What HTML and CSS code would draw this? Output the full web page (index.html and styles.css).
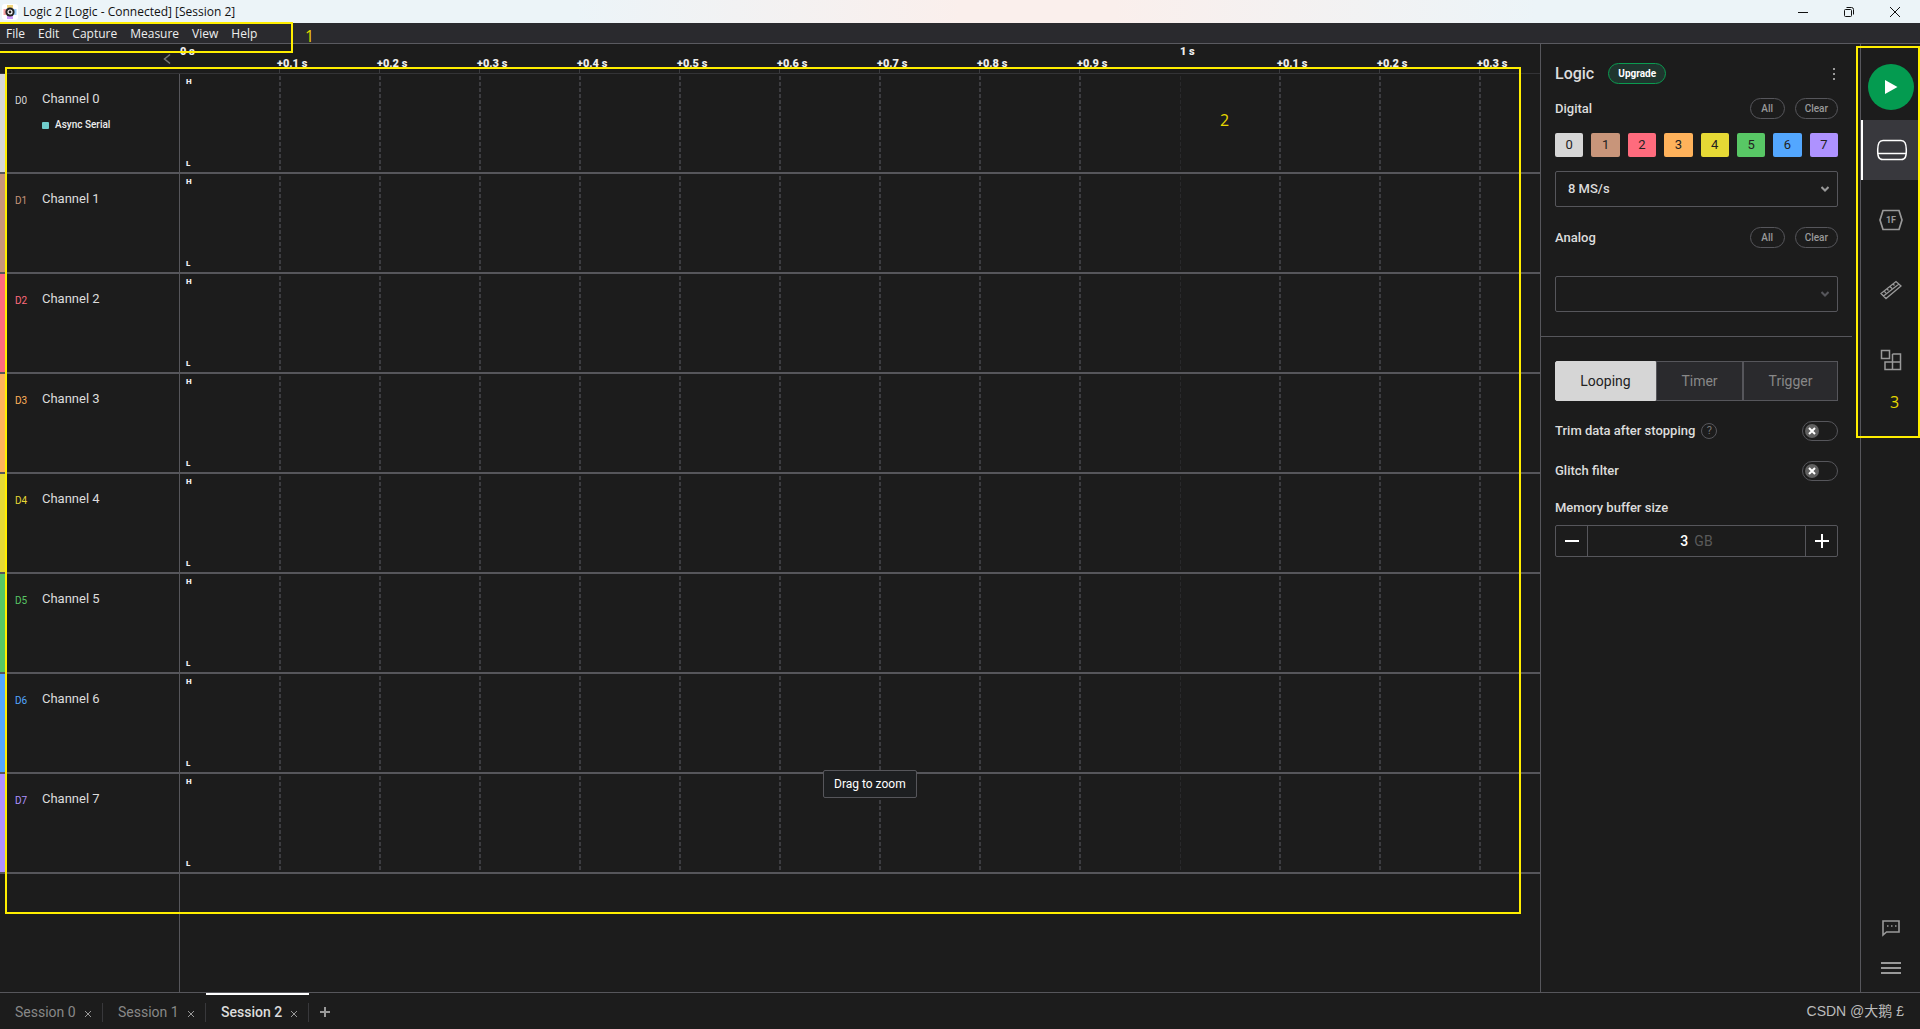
FILE: index.html
```html
<!DOCTYPE html>
<html lang="en">
<head>
<meta charset="utf-8">
<title>Logic 2 [Logic - Connected] [Session 2]</title>
<link rel="stylesheet" href="styles.css">
</head>
<body>
<header class="titlebar">
  <svg class="app-logo" width="16" height="16" viewBox="0 0 16 16" aria-hidden="true">
    <rect width="16" height="16" rx="3" fill="#fff"/>
    <g stroke-width="1.2"><path stroke="#e8b923" d="M6 1v3M8 1v3M10 1v3"/><path stroke="#a855f7" d="M6 12v3M8 12v3M10 12v3"/><path stroke="#ef4444" d="M1.500 6h3M1.500 8h3M1.500 10h3"/><path stroke="#3b9cf5" d="M11.500 6h3M11.500 8h3M11.500 10h3"/></g>
    <circle cx="8" cy="8" r="4.600" fill="#222"/><circle cx="8" cy="8" r="2" fill="none" stroke="#fff" stroke-width="1.200"/>
  </svg>
  <span class="title">Logic 2 [Logic - Connected] [Session 2]</span>
  <div class="window-controls">
    <button aria-label="Minimize"><svg width="12" height="12"><path d="M1 6.500h10"/></svg></button>
    <button aria-label="Restore"><svg width="12" height="12"><rect x="1.500" y="3.500" width="7" height="7" rx="1"/><path d="M3.500 1.500h5a2 2 0 0 1 2 2v5"/></svg></button>
    <button aria-label="Close"><svg width="12" height="12"><path d="M1 1l10 10M11 1L1 11"/></svg></button>
  </div>
</header>
<nav class="menubar">
  <button>File</button><button>Edit</button><button>Capture</button><button>Measure</button><button>View</button><button>Help</button>
</nav>
<div class="workspace">
  <main class="capture">
    <div class="ruler">
      <div class="ruler-left"><button aria-label="Collapse channels"><svg width="8" height="12"><path d="M7 1.500L1.500 6L7 10.500" fill="none" stroke="#777" stroke-width="1.500"/></svg></button></div>
      <div class="ticks">
        <span class="major">0 s</span><span>+0.1 s</span><span>+0.2 s</span><span>+0.3 s</span><span>+0.4 s</span><span>+0.5 s</span><span>+0.6 s</span><span>+0.7 s</span><span>+0.8 s</span><span>+0.9 s</span><span class="major">1 s</span><span>+0.1 s</span><span>+0.2 s</span><span>+0.3 s</span>
      </div>
    </div>
    <section class="channel c0"><div class="label"><span class="id">D0</span><div><h2>Channel 0</h2><p class="analyzer">Async Serial</p></div></div><div class="trace"><span>H</span><span>L</span></div></section>
    <section class="channel c1"><div class="label"><span class="id">D1</span><h2>Channel 1</h2></div><div class="trace"><span>H</span><span>L</span></div></section>
    <section class="channel c2"><div class="label"><span class="id">D2</span><h2>Channel 2</h2></div><div class="trace"><span>H</span><span>L</span></div></section>
    <section class="channel c3"><div class="label"><span class="id">D3</span><h2>Channel 3</h2></div><div class="trace"><span>H</span><span>L</span></div></section>
    <section class="channel c4"><div class="label"><span class="id">D4</span><h2>Channel 4</h2></div><div class="trace"><span>H</span><span>L</span></div></section>
    <section class="channel c5"><div class="label"><span class="id">D5</span><h2>Channel 5</h2></div><div class="trace"><span>H</span><span>L</span></div></section>
    <section class="channel c6"><div class="label"><span class="id">D6</span><h2>Channel 6</h2></div><div class="trace"><span>H</span><span>L</span></div></section>
    <section class="channel c7"><div class="label"><span class="id">D7</span><h2>Channel 7</h2></div><div class="trace"><span>H</span><span>L</span></div></section>
    <div class="below"></div>
    <div class="tooltip" role="tooltip">Drag to zoom</div>
  </main>
  <aside class="device">
    <div class="device-top">
      <div class="heading"><h1>Logic</h1><button class="upgrade">Upgrade</button><button class="more" aria-label="More"><svg width="4" height="14" fill="#999"><rect x="1" y="1" width="2" height="2"/><rect x="1" y="6" width="2" height="2"/><rect x="1" y="11" width="2" height="2"/></svg></button></div>
      <div class="row"><label for="rate">Digital</label><button class="pill">All</button><button class="pill">Clear</button></div>
      <div class="inputs">
        <button class="c0">0</button><button class="c1">1</button><button class="c2">2</button><button class="c3">3</button><button class="c4">4</button><button class="c5">5</button><button class="c6">6</button><button class="c7">7</button>
      </div>
      <div class="select"><select id="rate"><option>8 MS/s</option></select><svg width="8" height="6"><path d="M.5 1L4 4.500L7.500 1"/></svg></div>
      <div class="row analog"><label for="analog-rate">Analog</label><button class="pill">All</button><button class="pill">Clear</button></div>
      <div class="select off"><select id="analog-rate" disabled><option></option></select><svg width="8" height="6"><path d="M.5 1L4 4.500L7.500 1"/></svg></div>
    </div>
    <div class="device-mode">
      <div class="modes"><button class="on">Looping</button><button>Timer</button><button>Trigger</button></div>
      <div class="option"><label for="trim">Trim data after stopping</label><button class="help" aria-label="Help on trimming">?</button><span class="switch"><input type="checkbox" id="trim"><svg width="14" height="14"><circle cx="7" cy="7" r="7"/><path d="M4 4l6 6M10 4l-6 6"/></svg></span></div>
      <div class="option"><label for="glitch">Glitch filter</label><span class="switch"><input type="checkbox" id="glitch"><svg width="14" height="14"><circle cx="7" cy="7" r="7"/><path d="M4 4l6 6M10 4l-6 6"/></svg></span></div>
      <label class="memory-label" for="memory">Memory buffer size</label>
      <div class="stepper">
        <button aria-label="Decrease"><svg width="14" height="14"><path d="M0 7h14"/></svg></button>
        <div class="value"><input id="memory" value="3"><span>GB</span></div>
        <button aria-label="Increase"><svg width="14" height="14"><path d="M0 7h14M7 0v14"/></svg></button>
      </div>
    </div>
  </aside>
  <nav class="rail">
    <button class="play" aria-label="Start"><svg width="14" height="16"><path d="M1 1v14l12.500-7z" fill="#fff"/></svg></button>
    <button class="tool on" aria-label="Device"><svg width="32" height="22" fill="none" stroke="#fff" stroke-width="1.500"><path d="M7 1.500h18c4 0 5 3 5.300 9c.2 7-1 10-5 10H6.700c-4 0-5.200-3-5-10C2 4.500 3 1.500 7 1.500z"/><path d="M2 14.500h28"/></svg></button>
    <button class="tool" aria-label="Analyzers"><svg width="24" height="22" fill="none" stroke="#999" stroke-width="1.700"><path d="M4 1.500h16L23 11l-3 9.500H4L1 11z"/><text x="12" y="14" text-anchor="middle">1F</text></svg></button>
    <button class="tool" aria-label="Measurements"><svg width="22" height="20" fill="none" stroke="#999" stroke-width="1.300"><path d="M1 13.500L16 1.500L21 6L6 18.500zM3.500 16L19 4M4 11l2 2M7 9l1.500 1.500M10 6.500l2 2M13 4l1.500 1.500"/></svg></button>
    <button class="tool" aria-label="Extensions"><svg width="22" height="22" fill="none" stroke="#999" stroke-width="1.500"><path d="M1.500 1.500h8v8h-8zM12.500 5h8v15.500h-15.500v-7.500h15.500M12.500 5v15.500"/></svg></button>
    <button class="small feedback" aria-label="Feedback"><svg width="20" height="18" fill="none" stroke="#999" stroke-width="1.600"><path d="M2 2h16v11H5.500L2 16z"/><path stroke-dasharray="1.500 2.500" d="M6 7h10"/></svg></button>
    <button class="small" aria-label="Menu"><svg width="20" height="14" fill="none" stroke="#999" stroke-width="2"><path d="M0 2h20M0 7h20M0 12h20"/></svg></button>
  </nav>
</div>
<footer class="sessions">
  <div class="tab"><button>Session 0</button><button class="close" aria-label="Close Session 0"><svg width="8" height="8"><path d="M1 1l6 6M7 1L1 7"/></svg></button></div>
  <div class="tab"><button>Session 1</button><button class="close" aria-label="Close Session 1"><svg width="8" height="8"><path d="M1 1l6 6M7 1L1 7"/></svg></button></div>
  <div class="tab on"><button>Session 2</button><button class="close" aria-label="Close Session 2"><svg width="8" height="8"><path d="M1 1l6 6M7 1L1 7"/></svg></button></div>
  <button class="add" aria-label="New session"><svg width="10" height="10"><path d="M0 5h10M5 0v10"/></svg></button>
  <span class="credit">CSDN @大鹅 £</span>
</footer>
<div class="mark m1"><b>1</b></div>
<div class="mark m2"><b>2</b></div>
<div class="mark m3"><b>3</b></div>
</body>
</html>
```
FILE: styles.css
```css
* { box-sizing: border-box; }
body { margin: 0; min-height: 100vh; display: flex; flex-direction: column; position: relative; background: #1c1c1c; color: #dcdcdc; font: 13px/16px Roboto, "Noto Sans CJK SC", sans-serif; }
button { margin: 0; padding: 0; border: 0; background: none; color: inherit; font: inherit; display: flex; align-items: center; justify-content: center; }
h1, h2, p { margin: 0; font: inherit; }

/* channel colours */
.c0 { --c: #d6d6d6; }
.c1 { --c: #c8957a; }
.c2 { --c: #ff6b7d; }
.c3 { --c: #ffb25b; }
.c4 { --c: #e6d935; }
.c5 { --c: #58c765; }
.c6 { --c: #53a7ff; }
.c7 { --c: #ae92ff; }

.titlebar { height: 23px; display: flex; align-items: center; padding-left: 2px; gap: 5px; background: linear-gradient(90deg, #ecf4f8 0, #ecf4f8 30%, #faefec 50%, #faefec 58%, #ecf4f8 80%); color: #111; font: 12px/16px "Open Sans", "Noto Sans", sans-serif; }
.window-controls { display: flex; margin-left: auto; padding-right: 2px; }
.window-controls button { width: 46px; height: 20px; }
.window-controls svg { fill: none; stroke: #111; }
.menubar { height: 21px; display: flex; align-items: center; gap: 13px; padding: 2px 6px 0; background: #2a2a2e; border-bottom: 1px solid #5a5a60; color: #eee; font: 12px/16px "Open Sans", "Noto Sans", sans-serif; }

.workspace { flex: 1; display: flex; }
.capture { flex: 1; min-width: 0; display: flex; flex-direction: column; position: relative; }
.ruler { height: 30px; display: flex; border-bottom: 1px solid #333336; }
.ruler-left { width: 180px; flex: none; display: flex; justify-content: flex-end; align-items: center; padding-right: 9px; }
.ticks { flex: 1; display: flex; overflow: hidden; font-size: 11px; line-height: 12px; font-weight: 900; color: #eee;
  background:
    linear-gradient(#1c1c1c, #1c1c1c) 999px 0 / 2px 100% no-repeat,
    repeating-linear-gradient(90deg, transparent 0 99px, #3c3c40 99px 100px) 0 100% / 100px 4px repeat-x; }
.ticks span { flex: none; width: 100px; padding-top: 14px; margin-left: -3px; margin-right: 3px; }
.ticks .major { padding-top: 2px; margin-left: 0; margin-right: 0; }
.channel { height: 100px; display: flex; border-bottom: 2px solid #56565b; background: linear-gradient(var(--c), var(--c)) 0 0 / 5px 100% no-repeat; }
.label { width: 180px; flex: none; display: flex; align-items: flex-start; padding: 17px 0 0 15px; border-right: 1px solid #56565b; }
.label .id { width: 27px; flex: none; padding-top: 2px; font-size: 10px; color: var(--c); }
.analyzer { display: flex; align-items: center; gap: 6px; margin-top: 10px; font-size: 10px; font-weight: 500; color: #eee; }
.analyzer::before { content: ""; width: 7px; height: 7px; border-radius: 1px; background: #70cccb; }
.trace { flex: 1; display: flex; flex-direction: column; justify-content: space-between; padding: 2px 6px; font-size: 8px; line-height: 12px; font-weight: 900; color: #eee;
  background:
    repeating-linear-gradient(#1c1c1c 0 2px, transparent 2px 6px),
    linear-gradient(#29292b, #29292b) 1000px 0 / 1px 100% no-repeat,
    linear-gradient(#1c1c1c, #1c1c1c) 999px 0 / 2px 100% no-repeat,
    linear-gradient(#1c1c1c, #1c1c1c) 0 0 / 2px 100% no-repeat,
    linear-gradient(90deg, #3c3c40 0 2px, transparent 2px) -1px 0 / 100px 100%; }
.below { flex: 1; width: 180px; border-right: 1px solid #56565b; }
.tooltip { position: absolute; left: 823px; top: 726px; padding: 5px 10px; border: 1px solid #56565b; border-radius: 2px; background: #1d1f21; color: #fff; font-size: 12px; }

.device { width: 320px; flex: none; border-left: 1px solid #56565b; }
.device-top { padding: 18px 14px 24px 14px; margin-right: 8px; border-bottom: 1px solid #56565b; }
.heading { display: flex; align-items: center; height: 23px; }
.heading h1 { font-size: 16px; font-weight: 500; }
.upgrade { width: 58px; height: 21px; margin-left: 14px; border: 1px solid #0b9b50; border-radius: 11px; background: #1f352e; color: #fff; font-size: 10px; font-weight: 700; }
.more { margin-left: auto; margin-right: 2px; }
.row { display: flex; align-items: center; gap: 10px; margin-top: 13px; height: 21px; }
.row label, .option label, .memory-label { font-size: 13px; font-weight: 500; }
.row label { margin-right: auto; }
.pill { height: 21px; min-width: 35px; padding: 0 9px; border: 1px solid #56565b; border-radius: 11px; color: #999; font-size: 10px; font-weight: 500; }
.inputs { display: grid; grid-template-columns: repeat(8, 1fr); gap: 8px; margin-top: 14px; }
.inputs button { height: 24px; border-radius: 2px; background: var(--c); color: #222; }
.select { position: relative; margin-top: 14px; }
.select select { display: block; width: 100%; height: 36px; padding: 0 12px; appearance: none; border: 1px solid #56565b; border-radius: 2px; background: none; color: #dcdcdc; font: 500 13px/16px Roboto, sans-serif; opacity: 1; }
.select svg { position: absolute; right: 9px; top: 15px; fill: none; stroke: #999; stroke-width: 2px; pointer-events: none; }
.select.off { margin-top: 28px; }
.select.off svg { stroke: #56565b; }
.row.analog { margin-top: 20px; }
.device-mode { padding: 24px 22px 24px 14px; }
.modes { display: grid; grid-template-columns: 101fr 87fr 95fr; height: 40px; font-size: 14px; color: #888; }
.modes button { border: 1px solid #56565b; background: #2a2a2d; }
.modes .on { border-color: #d6d6d6; border-radius: 2px 0 0 2px; background: #d6d6d6; color: #222; }
.option { display: flex; align-items: center; height: 20px; margin-top: 20px; }
.help { width: 16px; height: 16px; margin-left: 6px; border: 1px solid #56565b; border-radius: 50%; color: #777; font-size: 11px; }
.switch { position: relative; display: flex; margin-left: auto; }
.switch input { appearance: none; margin: 0; width: 36px; height: 20px; border: 1px solid #56565b; border-radius: 10px; }
.switch svg { position: absolute; left: 3px; top: 3px; pointer-events: none; fill: #606060; stroke: #fff; stroke-width: 2px; }
.switch circle { stroke: none; }
.memory-label { display: block; margin-top: 19px; }
.stepper { display: flex; height: 32px; margin-top: 9px; border: 1px solid #56565b; border-radius: 2px; }
.stepper button { width: 31px; }
.stepper button svg { stroke: #fff; stroke-width: 2px; }
.value { flex: 1; display: flex; align-items: center; justify-content: center; gap: 5px; border: solid #56565b; border-width: 0 1px; color: #5a5a5a; }
.value input { width: 9px; padding: 0; border: 0; background: none; color: #fff; font: 500 14px/16px Roboto, sans-serif; }
.value span { font-size: 14px; }

.rail { width: 60px; flex: none; border-left: 1px solid #56565b; display: flex; flex-direction: column; align-items: center; padding: 20px 0 14px; }
.play { width: 46px; height: 46px; border-radius: 50%; background: #049b50; }
.tool { width: 100%; height: 60px; margin-top: 10px; }
.tool.on { background: #38383d; border-left: 2px solid #fff; }
.tool text { font: 700 9px Roboto, sans-serif; fill: #999; stroke: none; }
.small { height: 20px; margin-top: 20px; }
.feedback { margin-top: auto; }

.sessions { height: 37px; display: flex; border-top: 1px solid #56565b; color: #888; font-size: 14px; }
.tab { display: flex; align-items: center; justify-content: space-between; padding: 0 11px 0 15px; width: 103px; white-space: nowrap; border-top: 2px solid transparent; background: linear-gradient(#38383b, #38383b) 100% 8px / 1px 19px no-repeat; }
.tab.on { border-top-color: #fff; color: #dcdcdc; font-weight: 500; }
.close { padding-top: 3px; }
.close svg, .add svg { stroke: #999; fill: none; }
.add { width: 32px; padding-top: 2px; }
.add svg { stroke-width: 2px; }
.credit { margin-left: auto; align-self: center; padding-right: 16px; color: #bbb; font: 14px/16px "Liberation Sans", "Noto Sans CJK SC", sans-serif; }

/* numbered callouts over the interface */
.mark { position: absolute; border: 2px solid #ffee00; pointer-events: none; }
.mark b { position: absolute; color: #e6d700; font: 16px/16px "Open Sans", sans-serif; }
.m1 { left: -2px; top: 22px; width: 295px; height: 31px; }
.m2 { left: 5px; top: 67px; right: 399px; height: 847px; }
.m3 { right: 0; top: 46px; width: 64px; height: 392px; }
.m1 b { left: 305px; top: 4px; }
.m2 b { left: 1213px; top: 43px; }
.m3 b { left: 32px; top: 346px; }
```
